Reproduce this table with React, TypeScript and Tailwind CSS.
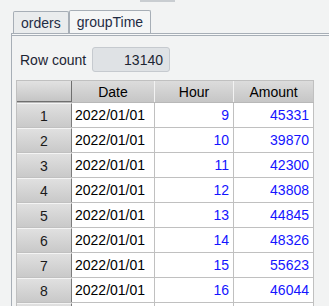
import React from 'react';

const rows = [
  { n: 1, date: '2022/01/01', hour: 9, amount: 45331 },
  { n: 2, date: '2022/01/01', hour: 10, amount: 39870 },
  { n: 3, date: '2022/01/01', hour: 11, amount: 42300 },
  { n: 4, date: '2022/01/01', hour: 12, amount: 43808 },
  { n: 5, date: '2022/01/01', hour: 13, amount: 44845 },
  { n: 6, date: '2022/01/01', hour: 14, amount: 48326 },
  { n: 7, date: '2022/01/01', hour: 15, amount: 55623 },
  { n: 8, date: '2022/01/01', hour: 16, amount: 46044 },
];

const App: React.FC = () => {
  return (
    <div
      className="w-[329px] h-[306px] overflow-hidden bg-[#f2f3f3] text-[14px] leading-[16px] text-black"
      style={{ fontFamily: '"Liberation Sans", Arial, sans-serif' }}
    >
      {/* cut-off strip at the top */}
      <div className="h-[10px]">
        <div className="ml-[140px] w-[35px] h-[2px] bg-[#c9cdd1]" />
      </div>

      {/* Tabs */}
      <div className="flex items-end h-[23px] pl-[13px]">
        <div className="h-[22px] px-[7px] flex items-center border border-b-0 border-[#a7aeb6] rounded-t-[2px] bg-[#eaeced] text-[#1f2c44]">
          orders
        </div>
        <div className="h-[23px] px-[7px] flex items-center border border-b-0 border-[#a7aeb6] rounded-t-[2px] bg-[#f5f6f6] text-[#1f2c44]">
          groupTime
        </div>
      </div>

      {/* Panel */}
      <div className="ml-[11px] border-l border-[#a7aeb6]">
        <div className="h-[3px] border-t border-b border-[#a7aeb6] bg-[#f7f8f8]" />

        {/* Row count */}
        <div className="flex items-center pt-[11px] pl-[8px]">
          <span className="w-[72px] text-[#1c2533]">Row count</span>
          <div className="w-[78px] h-[25px] flex items-center justify-end pr-[6px] rounded-[3px] border border-[#c6cacf] bg-[#dfe2e5] text-[#1c2533]">
            13140
          </div>
        </div>

        {/* Table */}
        <div className="mt-[8px] ml-[4px] w-[298px] border-l border-t border-[#c0c0c0] bg-white">
          {/* header */}
          <div className="flex h-[22px] border-b border-[#b8b8b8]">
            <div className="w-[55px] border-r border-b border-r-[#6f6f6f] border-b-[#6f6f6f] bg-linear-to-b from-[#e2e2e2] to-[#c5c5c5]" />
            <div className="w-[83px] flex items-center justify-center border-r border-[#f2f2f2] bg-linear-to-b from-[#dcdcdc] to-[#c6c6c6]">
              Date
            </div>
            <div className="w-[79px] flex items-center justify-center border-r border-[#f2f2f2] bg-linear-to-b from-[#dcdcdc] to-[#c6c6c6]">
              Hour
            </div>
            <div className="w-[80px] flex items-center justify-center border-r border-[#c0c0c0] bg-linear-to-b from-[#dcdcdc] to-[#c6c6c6]">
              Amount
            </div>
          </div>

          {rows.map((r) => (
            <div key={r.n} className="flex h-[25px] border-b border-[#c0c0c0]">
              <div className="w-[55px] flex items-center justify-center border-r border-[#7c7c7c] border-t border-t-[#f4f4f4] bg-linear-to-b from-[#e0e0e0] to-[#c9c9c9] text-[#1a1a1a]">
                {r.n}
              </div>
              <div className="w-[83px] flex items-center pl-[3px] border-r border-[#c0c0c0]">
                {r.date}
              </div>
              <div className="w-[79px] flex items-center justify-end pr-[4px] border-r border-[#c0c0c0] text-[#1414ff]">
                {r.hour}
              </div>
              <div className="w-[80px] flex items-center justify-end pr-[4px] border-r border-[#c0c0c0] text-[#1414ff]">
                {r.amount}
              </div>
            </div>
          ))}

          {/* next row, cut off by the window edge */}
          <div className="flex h-[25px]">
            <div className="w-[55px] border-r border-[#7c7c7c] border-t border-t-[#f4f4f4] bg-linear-to-b from-[#e0e0e0] to-[#c9c9c9]" />
            <div className="w-[83px] border-r border-[#c0c0c0]" />
            <div className="w-[79px] border-r border-[#c0c0c0]" />
            <div className="w-[80px] border-r border-[#c0c0c0]" />
          </div>
        </div>
      </div>
    </div>
  );
};

export default App;
